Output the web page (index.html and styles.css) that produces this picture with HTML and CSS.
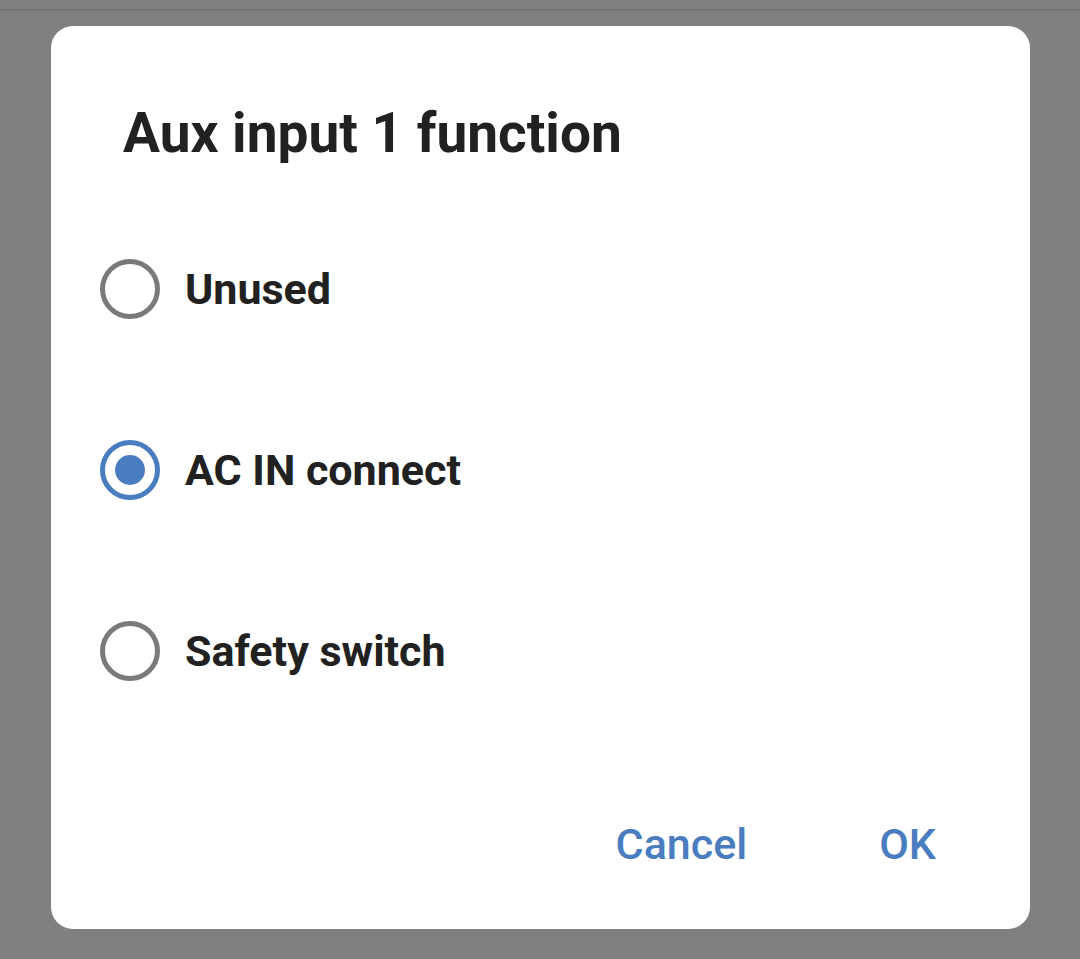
FILE: index.html
```html
<!DOCTYPE html>
<html>
<head>
<meta charset="utf-8">
<link rel="stylesheet" href="styles.css">
</head>
<body>
<div class="topline"></div>
<div class="dialog">
  <h1 class="title">Aux input 1 function</h1>
  <div class="options">
    <div class="option">
      <span class="radio"></span>
      <span class="label">Unused</span>
    </div>
    <div class="option">
      <span class="radio checked"><span class="dot"></span></span>
      <span class="label">AC IN connect</span>
    </div>
    <div class="option">
      <span class="radio"></span>
      <span class="label">Safety switch</span>
    </div>
  </div>
  <div class="actions">
    <span class="btn">Cancel</span>
    <span class="btn">OK</span>
  </div>
</div>
</body>
</html>
```
FILE: styles.css
```css
html, body {
  margin: 0;
  padding: 0;
}
body {
  background: #808080;
  width: 1080px;
  height: 959px;
  overflow: hidden;
  font-family: Roboto, "Liberation Sans", sans-serif;
}
.topline {
  height: 9px;
  border-bottom: 2px solid #737373;
}
.dialog {
  margin: 15px 0 0 51px;
  width: 979px;
  height: 903px;
  box-sizing: border-box;
  background: #ffffff;
  border-radius: 22px;
  padding-top: 79px;
  display: flex;
  flex-direction: column;
}
.title {
  margin: 0;
  padding-left: 72px;
  font-size: 55px;
  line-height: 56px;
  font-weight: 700;
  color: #212121;
}
.options {
  margin-top: 37.5px;
  display: flex;
  flex-direction: column;
}
.option {
  height: 181px;
  display: flex;
  align-items: center;
  padding-left: 49px;
}
.radio {
  width: 60px;
  height: 60px;
  box-sizing: border-box;
  border: 5.5px solid #7a7a7a;
  border-radius: 50%;
  display: flex;
  align-items: center;
  justify-content: center;
  flex: none;
}
.radio.checked {
  border-color: #4a7cc0;
}
.dot {
  width: 30px;
  height: 30px;
  border-radius: 50%;
  background: #4a7cc0;
}
.label {
  margin-left: 25px;
  font-size: 43px;
  line-height: 50px;
  font-weight: 700;
  color: #212121;
}
.actions {
  margin-top: 76.5px;
  display: flex;
  justify-content: flex-end;
  padding-right: 94px;
  gap: 132px;
}
.btn {
  font-size: 43px;
  line-height: 52px;
  font-weight: 500;
  color: #4a7cc0;
}
```
